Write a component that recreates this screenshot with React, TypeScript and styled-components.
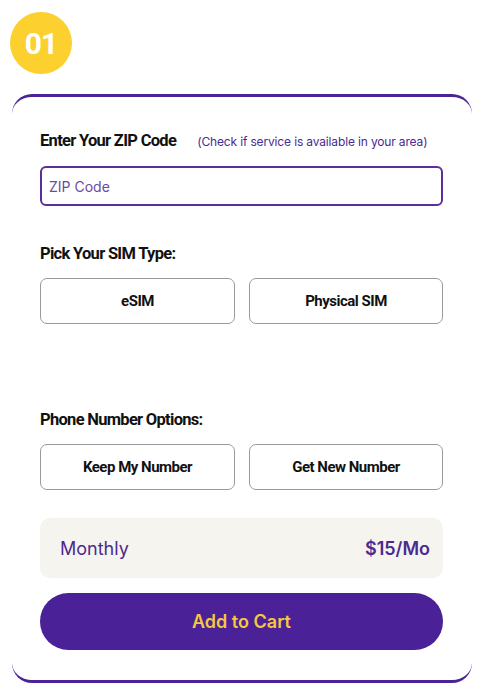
import React from "react";
import styled, { createGlobalStyle } from "styled-components";

const Global = createGlobalStyle`
  html, body { margin: 0; padding: 0; background: #ffffff; }
  body { font-family: "Inter", "Liberation Sans", sans-serif; }
  * { box-sizing: border-box; }
`;

const Page = styled.div`
  width: 483px;
  height: 698px;
  padding: 12px 11px 0 12px;
  display: flex;
  flex-direction: column;
`;

const Badge = styled.div`
  width: 62px;
  height: 62px;
  margin-left: -2px;
  border-radius: 50%;
  background: #fcd02e;
  color: #ffffff;
  font-family: "Roboto", "Liberation Sans", sans-serif;
  font-weight: 700;
  font-size: 30px;
  letter-spacing: -1px;
  display: flex;
  align-items: center;
  justify-content: center;
`;

const Card = styled.div`
  margin-top: 20px;
  width: 460px;
  border-top: 3px solid #4a2396;
  border-bottom: 3px solid #4a2396;
  border-left: none;
  border-right: none;
  border-radius: 20px;
  padding: 34px 29px 30px 28px;
  display: flex;
  flex-direction: column;
`;

const LabelRow = styled.div`
  display: flex;
  align-items: center;
  gap: 21px;
`;

const Label = styled.div`
  font-family: "Roboto", "Liberation Sans", sans-serif;
  font-weight: 700;
  font-size: 16.5px;
  letter-spacing: -0.7px;
  color: #111111;
  line-height: 20px;
`;

const Hint = styled.span`
  font-family: "Inter", "Liberation Sans", sans-serif;
  font-size: 12px;
  color: #4b2a91;
  letter-spacing: -0.15px;
  padding-top: 1px;
`;

const Input = styled.input`
  margin-top: 15px;
  width: 403px;
  height: 40px;
  border: 2px solid #5a2e9c;
  border-radius: 6px;
  padding: 0 7px;
  font-family: "Inter", "Liberation Sans", sans-serif;
  font-size: 14px;
  color: #4b2a91;
  outline: none;
  &::placeholder { color: #6a4ba6; }
`;

const Section = styled.div<{ $top: number }>`
  margin-top: ${(p) => p.$top}px;
  display: flex;
  flex-direction: column;
`;

const Options = styled.div`
  margin-top: 14px;
  display: grid;
  grid-template-columns: 195px 194px;
  gap: 14px;
`;

const Option = styled.button`
  height: 46px;
  border: 1px solid #9a9a9a;
  border-radius: 7px;
  background: #ffffff;
  font-family: "Roboto", "Liberation Sans", sans-serif;
  font-weight: 700;
  font-size: 15px;
  letter-spacing: -0.5px;
  color: #111111;
  cursor: pointer;
`;

const Price = styled.div`
  margin-top: 28px;
  width: 403px;
  height: 60px;
  border-radius: 10px;
  background: #f6f4ef;
  display: flex;
  align-items: center;
  justify-content: space-between;
  padding: 0 13px 0 20px;
  color: #4b2a91;
  font-family: "Inter", "Liberation Sans", sans-serif;
  font-size: 18px;
`;

const Amount = styled.span`
  font-weight: 600;
`;

const Cart = styled.button`
  margin-top: 15px;
  width: 403px;
  height: 57px;
  border: none;
  border-radius: 29px;
  background: #4a2196;
  color: #f5c842;
  font-family: "Inter", "Liberation Sans", sans-serif;
  font-weight: 600;
  font-size: 18px;
  cursor: pointer;
`;

export default function App() {
  return (
    <>
      <Global />
      <Page>
        <Badge>01</Badge>
        <Card>
          <LabelRow>
            <Label>Enter Your ZIP Code</Label>
            <Hint>(Check if service is available in your area)</Hint>
          </LabelRow>
          <Input placeholder="ZIP Code" />
          <Section $top={38}>
            <Label>Pick Your SIM Type:</Label>
            <Options>
              <Option>eSIM</Option>
              <Option>Physical SIM</Option>
            </Options>
          </Section>
          <Section $top={86}>
            <Label>Phone Number Options:</Label>
            <Options>
              <Option>Keep My Number</Option>
              <Option>Get New Number</Option>
            </Options>
          </Section>
          <Price>
            <span>Monthly</span>
            <Amount>$15/Mo</Amount>
          </Price>
          <Cart>Add to Cart</Cart>
        </Card>
      </Page>
    </>
  );
}
